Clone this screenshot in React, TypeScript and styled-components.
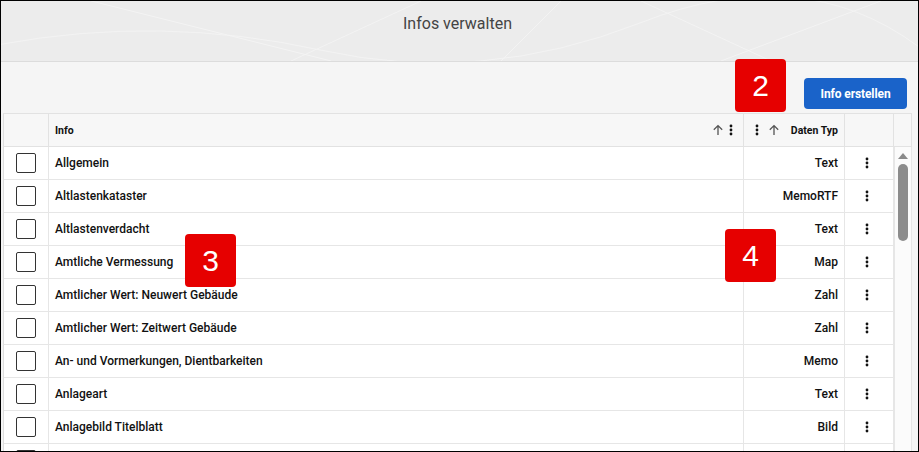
import React from "react";
import styled, { createGlobalStyle } from "styled-components";

const Global = createGlobalStyle`
  html, body { margin: 0; padding: 0; background: #fff; }
  * { box-sizing: border-box; }
  body { font-family: Roboto, "Noto Sans", Arial, sans-serif; }
`;

const Frame = styled.div`
  position: relative;
  width: 919px;
  height: 452px;
  border: 1px solid #000;
  overflow: hidden;
  background: #f5f5f5;
  display: flex;
  flex-direction: column;
`;

const Header = styled.header`
  position: relative;
  height: 61px;
  flex: none;
  background: #ececec;
  border-bottom: 1px solid #dcdcdc;
  display: flex;
  align-items: flex-start;
  justify-content: center;
  padding-top: 13px;
  overflow: hidden;
`;

const HeaderDeco = styled.svg`
  position: absolute;
  inset: 0;
  width: 100%;
  height: 100%;
`;

const Title = styled.h1`
  position: relative;
  margin: 0 0 0 -4px;
  font-size: 16px;
  font-weight: 400;
  color: #444;
  line-height: 20px;
`;

const Toolbar = styled.div`
  height: 51px;
  flex: none;
  display: flex;
  justify-content: flex-end;
  align-items: flex-start;
  padding: 16px 11px 0 0;
`;

const PrimaryButton = styled.button`
  width: 103px;
  height: 31px;
  border: none;
  border-radius: 4px;
  background: #1a63c9;
  color: #fff;
  font-family: Roboto, Arial, sans-serif;
  font-size: 12px;
  font-weight: 700;
  letter-spacing: -0.1px;
  cursor: pointer;
`;

const Table = styled.div`
  margin: 0 6px 0 2px;
  flex: 1;
  display: flex;
  flex-direction: column;
  border-left: 1px solid #dedede;
  border-top: 1px solid #e2e2e2;
  background: #fff;
  min-height: 0;
`;

const cols = "45px 1fr 101px 49px";

const HeadRow = styled.div`
  display: grid;
  grid-template-columns: ${cols} 18px;
  height: 33px;
  background: #f7f7f7;
  border-bottom: 1px solid #e2e2e2;
  flex: none;
`;

const HeadCell = styled.div<{ $align?: string; $padRight?: number }>`
  display: flex;
  align-items: center;
  justify-content: ${(p) => p.$align || "flex-start"};
  padding: 0 ${(p) => p.$padRight ?? 6}px 0 6px;
  border-right: 1px solid #e2e2e2;
  font-size: 10.5px;
  font-weight: 700;
  color: #111;
`;

const HeadLabel = styled.span<{ $grow?: boolean }>`
  flex: ${(p) => (p.$grow ? 1 : "none")};
  margin-left: ${(p) => (p.$grow ? "0" : "11px")};
`;

const IconSlot = styled.span<{ $gap: number }>`
  display: inline-flex;
  margin-left: ${(p) => p.$gap}px;
`;

const Body = styled.div`
  flex: 1;
  display: flex;
  min-height: 0;
`;

const Rows = styled.div`
  flex: 1;
  overflow: hidden;
`;

const Row = styled.div`
  display: grid;
  grid-template-columns: ${cols};
  height: 33px;
  border-bottom: 1px solid #e6e6e6;
`;

const Cell = styled.div<{ $align?: string }>`
  display: flex;
  align-items: center;
  justify-content: ${(p) => p.$align || "flex-start"};
  padding: 0 6px;
  border-right: 1px solid #e6e6e6;
  font-size: 12px;
  font-weight: 500;
  color: #111;
  white-space: nowrap;
`;

const ActionCell = styled(Cell)`
  justify-content: center;
  padding: 0 4px 0 0;
`;

const Check = styled.span`
  width: 20px;
  height: 20px;
  margin-left: 6px;
  border: 1.5px solid #333;
  border-radius: 2px;
  background: #fff;
`;

const Scrollbar = styled.div`
  width: 18px;
  flex: none;
  background: #fbfbfb;
  border-left: 1px solid #e6e6e6;
  border-right: 1px solid #e6e6e6;
  display: flex;
  flex-direction: column;
  align-items: center;
  padding-top: 6px;
  gap: 5px;
`;

const ScrollArrow = styled.span`
  width: 0;
  height: 0;
  border-left: 5px solid transparent;
  border-right: 5px solid transparent;
  border-bottom: 6px solid #8a8a8a;
`;

const ScrollThumb = styled.span`
  width: 10px;
  height: 77px;
  border-radius: 5px;
  background: #8c8c8c;
`;

const Badge = styled.div<{ $x: number; $y: number }>`
  position: absolute;
  left: ${(p) => p.$x}px;
  top: ${(p) => p.$y}px;
  width: 51px;
  height: 53px;
  border-radius: 4px;
  background: #e60000;
  color: #fff;
  font-family: "Liberation Sans", Arial, sans-serif;
  font-size: 30px;
  display: flex;
  align-items: center;
  justify-content: center;
`;

const Dots = () => (
  <svg width="4" height="12" viewBox="0 0 4 12">
    <circle cx="2" cy="2" r="1.4" fill="#111" />
    <circle cx="2" cy="6" r="1.4" fill="#111" />
    <circle cx="2" cy="10" r="1.4" fill="#111" />
  </svg>
);

const ArrowUp = () => (
  <svg width="12" height="12" viewBox="0 0 12 12">
    <path d="M6 11V1.8M1.8 5.8L6 1.6l4.2 4.2" stroke="#555" strokeWidth="1.3" fill="none" />
  </svg>
);

const rows: [string, string][] = [
  ["Allgemein", "Text"],
  ["Altlastenkataster", "MemoRTF"],
  ["Altlastenverdacht", "Text"],
  ["Amtliche Vermessung", "Map"],
  ["Amtlicher Wert: Neuwert Gebäude", "Zahl"],
  ["Amtlicher Wert: Zeitwert Gebäude", "Zahl"],
  ["An- und Vormerkungen, Dientbarkeiten", "Memo"],
  ["Anlageart", "Text"],
  ["Anlagebild Titelblatt", "Bild"],
];

export default function App() {
  return (
    <>
      <Global />
      <Frame>
        <Header>
          <HeaderDeco viewBox="0 0 917 61" preserveAspectRatio="none">
            <g stroke="#f3f3f3" strokeWidth="1" fill="none">
              <path d="M0 44 Q160 14 320 50 T640 22 T917 46" />
              <path d="M90 0 L330 61" />
              <path d="M290 61 L420 0" />
              <path d="M500 61 L560 0" />
              <path d="M640 0 L770 61" />
              <path d="M720 61 L880 0" />
            </g>
          </HeaderDeco>
          <Title>Infos verwalten</Title>
        </Header>
        <Toolbar>
          <PrimaryButton>Info erstellen</PrimaryButton>
        </Toolbar>
        <Table>
          <HeadRow>
            <HeadCell />
            <HeadCell $padRight={10}>
              <HeadLabel $grow>Info</HeadLabel>
              <ArrowUp />
              <IconSlot $gap={5}>
                <Dots />
              </IconSlot>
            </HeadCell>
            <HeadCell $align="flex-end">
              <Dots />
              <IconSlot $gap={9}>
                <ArrowUp />
              </IconSlot>
              <HeadLabel>Daten Typ</HeadLabel>
            </HeadCell>
            <HeadCell />
            <HeadCell />
          </HeadRow>
          <Body>
            <Rows>
              {rows.map(([name, type]) => (
                <Row key={name}>
                  <Cell>
                    <Check />
                  </Cell>
                  <Cell>{name}</Cell>
                  <Cell $align="flex-end">{type}</Cell>
                  <ActionCell>
                    <Dots />
                  </ActionCell>
                </Row>
              ))}
              <Row>
                <Cell>
                  <Check />
                </Cell>
                <Cell />
                <Cell />
                <ActionCell />
              </Row>
            </Rows>
            <Scrollbar>
              <ScrollArrow />
              <ScrollThumb />
            </Scrollbar>
          </Body>
        </Table>
        <Badge $x={734} $y={58}>2</Badge>
        <Badge $x={184} $y={233}>3</Badge>
        <Badge $x={724} $y={228}>4</Badge>
      </Frame>
    </>
  );
}
